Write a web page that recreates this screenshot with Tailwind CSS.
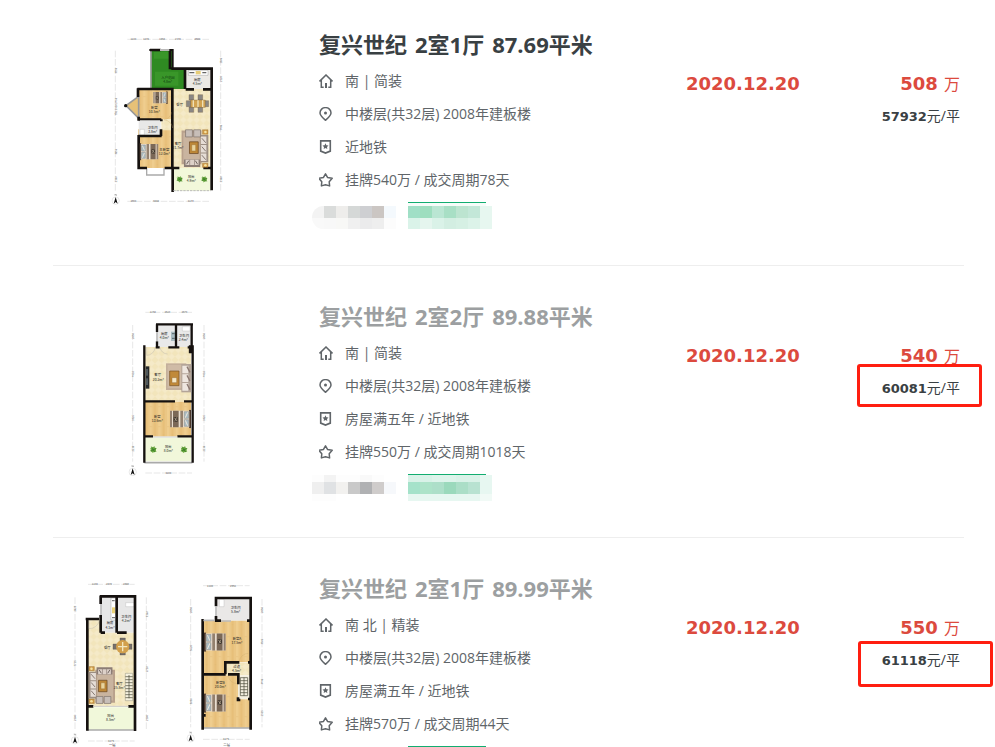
<!DOCTYPE html>
<html lang="zh-CN">
<head>
    <meta charset="UTF-8">
    <meta name="viewport" content="width=device-width, initial-scale=1.0">
    <title>复兴世纪 成交记录</title>
    <script src="https://cdn.jsdelivr.net/npm/@tailwindcss/browser@4"></script>
</head>
<body class="bg-white font-['Open_Sans','Noto_Sans_CJK_SC',sans-serif] text-[#606569]">

    <!-- Shared icons and floor plan parts -->
    <svg class="absolute w-0 h-0" aria-hidden="true">
        <defs>
            <symbol id="i-house" viewBox="0 0 14 14">
                <path d="M.5 7.400L7 1l6.500 6.400M2.300 6v7.300h2.400M11.700 6v7.300H9.300" fill="none" stroke="#606569" stroke-width="1.500"/>
                <path d="M6 9h2v5H6z" fill="#606569"/>
            </symbol>
            <symbol id="i-pin" viewBox="0 0 14 14">
                <path d="M6.500 13.300C3.500 10.600 1 8.400 1 5.900a5.500 5.300 0 0 1 11 0c0 2.500-2.500 4.700-5.500 7.400z" fill="none" stroke="#606569" stroke-width="1.500"/>
                <circle cx="6.500" cy="6" r="1.500" fill="#606569"/>
            </symbol>
            <symbol id="i-badge" viewBox="0 0 14 14">
                <path d="M1.700.9h9.600v10.200L6.500 13.100l-4.800-2z" fill="none" stroke="#606569" stroke-width="1.600"/>
                <path d="M6.500 3.300l.9 1.900 2.100.3-1.500 1.400.3 2.100-1.800-1-1.800 1 .3-2.100-1.500-1.400 2.100-.3z" fill="#606569"/>
            </symbol>
            <symbol id="i-star" viewBox="0 0 14 14">
                <path d="M6.500.9l2 3.500 4.700.9-3 3.500.4 4.100-4.100-1.100-4.100 1.100.4-4.100-3-3.500 4.700-.9z" fill="none" stroke="#606569" stroke-width="1.500" stroke-linejoin="round"/>
            </symbol>

            <pattern id="wood" width="26" height="60" patternUnits="userSpaceOnUse">
                <path d="M0 0h26v60H0z" fill="#ebc684"/>
                <path d="M0 0h7v60H0z" fill="#efcd8e"/>
                <path d="M13 0h6v60h-6z" fill="#e7be78"/>
                <path d="M0 20h7M13 44h6" stroke="#dfb36d" stroke-width="1"/>
            </pattern>
            <pattern id="tile" width="20" height="20" patternUnits="userSpaceOnUse">
                <path d="M0 0h20v20H0z" fill="#f2e5bb"/>
                <path d="M10 0l10 10-10 10L0 10z" fill="#f5eac8"/>
            </pattern>
            <symbol id="bed" viewBox="0 0 64 56">
                <path d="M0 0h6v56H0z" fill="#4a372c"/>
                <path d="M5 3h58v50H5z" fill="#e8ddd0"/>
                <path d="M24 3h8v50h-8zM57 3h6v50h-6z" fill="#94816f"/>
                <path d="M37 3h17v50H37z" fill="#7b6857"/>
                <path d="M7 6h13v20H7zM7 30h13v20H7z" fill="#a9bbc3" stroke="#6d6a60"/>
                <path d="M10 8l7 16M17 32l-7 16" stroke="#efe8db" stroke-width="3"/>
                <path d="M40 20h12v14H40z" fill="#3b332c"/>
                <path d="M42 22l8 10M49 21l-6 12" stroke="#c7b79f" stroke-width="2"/>
            </symbol>
            <symbol id="plant" viewBox="0 0 24 24">
                <path d="M12 12L4 2l7 3 5-4-1 6 8 1-6 4 5 7-8-2-4 6-1-7-8 1 5-5-4-6 8 3z" fill="#65a43a"/>
                <circle cx="12" cy="12" r="8" fill="#6aa83f"/>
                <path d="M12 12L6 5m6 7l8-3m-8 3l5 7m-5-7l-7 4" stroke="#2f7225" stroke-width="2"/>
                <circle cx="12" cy="12" r="3" fill="#3c8128"/>
            </symbol>
            <symbol id="compass" viewBox="0 0 26 34">
                <circle cx="13" cy="21" r="11" fill="none" stroke="#bbb"/>
                <path d="M13 10l6 20-6-5-6 5z" fill="#111"/>
                <path d="M11 6V1l4 5V1" fill="none" stroke="#555"/>
            </symbol>
            <!-- Sofas on the left and at the top of a rug -->
            <symbol id="lounge" viewBox="0 0 86 120">
                <path d="M24 10h62v104H24z" fill="#b9a18c"/>
                <path d="M30 17h50v90H30z" fill="#c9b49f"/>
                <path d="M3 16h24v84H3z" fill="#9c8e83"/>
                <path d="M9 20h17v23H9zM9 46h17v23H9zM9 72h17v23H9z" fill="#e6ddd6"/>
                <path d="M11 24l12 14M11 50l12 14M11 76l12 14" stroke="#83766f" stroke-width="3"/>
                <path d="M28 2h50v23H28z" fill="#8c7d76"/>
                <path d="M33 8h12v16H33zM47 8h12v16H47zM61 8h12v16H61z" fill="#ddd1c9"/>
                <path d="M36 10l7 11M70 10l-7 11" stroke="#6d625d" stroke-width="3"/>
                <path d="M34 43h27v36H34z" fill="#bd8737" stroke="#5e3d1c" stroke-width="2"/>
                <path d="M42 51h12v19H42z" fill="#e9d49c" stroke="#8a5e28"/>
                <path d="M4 0h17v13H4zM4 102h17v14H4z" fill="#cf9b48" stroke="#855b24"/>
                <circle cx="12" cy="7" r="4" fill="#f5e2a2"/>
                <circle cx="12" cy="109" r="4" fill="#f5e2a2"/>
                <path d="M27 94h21v22H27zM52 94h21v22H52z" fill="#c7beb8" stroke="#786d68" stroke-width="2"/>
            </symbol>
        </defs>
    </svg>

    <main class="h-screen overflow-hidden">
        <ul class="-mt-1.5 ml-[53px] mr-[31px]">

            <li class="flex h-[272px] border-b border-[#eeeeee]">
                <a href="#" class="flex w-[234px] shrink-0 justify-center pt-8" aria-label="户型图">
                    <svg class="w-[140px] h-[190px]" viewBox="0 -12 420 570" font-family="Noto Sans CJK SC, sans-serif" font-size="10" text-anchor="middle">
                        <g stroke="#b5b5b5" fill="none" stroke-dasharray="20 5">
                            <path d="M82 28h248M82 514h248M46 62v420M362 62v420"/>
                        </g>
                        <g fill="#555" font-size="8">
                            <text x="100" y="31">1140</text><text x="138" y="31">1270</text><text x="186" y="31">1850</text><text x="233" y="31">1370</text><text x="292" y="31">2600</text>
                            <text x="100" y="517">1650</text><text x="168" y="517">3040</text><text x="272" y="517">4170</text>
                            <text transform="translate(50 122) rotate(-90)">3750</text><text transform="translate(50 230) rotate(-90)">The 2920 2450</text><text transform="translate(50 365) rotate(-90)">3050</text><text transform="translate(50 448) rotate(-90)">2100</text>
                            <text transform="translate(366 92) rotate(-90)">1300</text><text transform="translate(366 147) rotate(-90)">2120</text><text transform="translate(366 293) rotate(-90)">7480</text><text transform="translate(366 448) rotate(-90)">2100</text>
                        </g>
                        <path d="M153 60h64v60h40v57H153z" fill="#2f8a22"/>
                        <path d="M162 66h45v20h-45zM165 125h70v42h-70z" fill="#399629"/>
                        <path d="M153 60v117" stroke="#999" stroke-width="5"/>
                        <path d="M257 119h76v58h-76z" fill="#ebe9e5"/>
                        <path d="M265 121h59v15h-59z" fill="#fff" stroke="#777"/>
                        <path d="M268 128h15M307 128h12" stroke="#666" stroke-width="4"/>
                        <path d="M287 123h15v10h-15z" fill="#e7cd77"/>
                        <path d="M112 180h103v90h-103zM114 298h103v116H114z" fill="url(#wood)"/>
                        <path d="M116 199l-38 28 38 38z" fill="#e7c177" stroke="#999" stroke-width="5"/>
                        <circle cx="77" cy="227" r="5" fill="#111"/>
                        <path d="M217 177h115v237H217zM184 267h34v34h-34z" fill="url(#tile)"/>
                        <path d="M116 270h66v48h-66z" fill="#e8e8e8"/>
                        <path d="M120 298h13v17h-13z" fill="#fff" stroke="#aaa"/>
                        <path d="M220 414h112v69H220z" fill="#f2f8da"/>
                        <path d="M140 415v20h52v-20" fill="#fff" stroke="#aaa" stroke-width="4"/>
                        <path d="M150 60h32M210 58v60M214 116h121v365M255 116v61M112 177h105v240M114 175v26M116 260v12M116 315v99h25M194 414h44M310 414h24M115 318h70M184 268v6M183 298v20M218 410v76M257 178h25M309 178h24M114 180v20" fill="none" stroke="#15110f" stroke-width="8"/>
                        <path d="M148 60h70v56M116 268h32M148 268h36" fill="none" stroke="#15110f" stroke-width="6"/>
                        <path d="M180 60h28" stroke="#ddd" stroke-width="5"/>
                        <path d="M220 482h112" stroke="#bbb" stroke-width="3" stroke-dasharray="7 3"/>
                        <path d="M191 269a24 24 0 0 0 23-22M218 294a26 26 0 0 0-26-24" fill="none" stroke="#c9a969"/>
                        <use href="#bed" x="118" y="338" width="58" height="54"/>
                        <g transform="rotate(180 181 203)"><use href="#bed" x="152" y="184" width="58" height="38"/></g>
                        <!-- Dining table -->
                        <g stroke="#6c5436" stroke-width="1">
                            <path d="M267 194h14v16h-14zM294 194h14v16h-14zM267 231h14v16h-14zM294 231h14v16h-14zM259 212h14v18h-14zM312 212h14v18h-14z" fill="#8a8784"/>
                            <path d="M272 210h44v22h-44z" fill="#d2a352"/>
                            <path d="M280 211v20M294 211v20M308 211v20" stroke="#efe1b8" stroke-width="4"/>
                        </g>
                        <g transform="rotate(180 288 353)"><use href="#lounge" x="248" y="293" width="84" height="118"/></g>
                        <use href="#plant" x="228" y="436" width="22" height="24"/><use href="#plant" x="302" y="436" width="22" height="24"/>
                        <g fill="#222">
                            <text x="204" y="146" fill="#0f3d10">入户花园</text><text x="203" y="159" fill="#0f3d10">4.8m²</text>
                            <text x="292" y="153">厨房</text><text x="292" y="165">4.5m²</text>
                            <text x="239" y="227">餐厅</text><text x="163" y="238">卧室</text><text x="163" y="250">10.5m²</text>
                            <text x="158" y="296">卫生间</text><text x="158" y="308">3.8m²</text>
                            <text x="193" y="362">主卧室</text><text x="193" y="374">12.0m²</text>
                            <text x="234" y="346">客厅</text><text x="234" y="358">21.7m²</text>
                            <text x="274" y="445">阳台</text><text x="274" y="457">4.9m²</text>
                        </g>
                        <use href="#compass" x="34" y="491" width="26" height="34"/>
                    </svg>
                </a>
                <div class="ml-8 flex-1 pt-[34px]">
                    <h2><a href="#" class="flex gap-2 text-[22px] leading-8 font-bold text-[#394043]"><span>复兴世纪</span> <span>2室1厅</span> <span>87.69平米</span></a></h2>
                    <div class="mt-1 text-sm leading-[33px]">
                        <p class="flex items-center gap-3"><svg class="size-3.5"><use href="#i-house"/></svg>南 | 简装</p>
                        <p class="flex items-center gap-3"><svg class="size-3.5"><use href="#i-pin"/></svg>中楼层(共32层) 2008年建板楼</p>
                        <p class="flex items-center gap-3"><svg class="size-3.5"><use href="#i-badge"/></svg>近地铁</p>
                        <p class="flex items-center gap-3"><svg class="size-3.5"><use href="#i-star"/></svg>挂牌540万 / 成交周期78天</p>
                    </div>
                    <div class="-ml-[7px] mt-1.5 flex gap-3">
                        <div class="mt-1 grid h-[23px] grid-cols-[repeat(7,12px)] grid-rows-[12px_11px] overflow-hidden rounded-l-full">
                            <i class="bg-[#f3f3f3]"></i><i class="bg-[#dadcdb]"></i><i class="bg-[#eeedeb]"></i><i class="bg-[#d5d8d7]"></i><i class="bg-[#cecfd2]"></i><i class="bg-[#cbc6c3]"></i><i class="bg-[#f4f9fd]"></i>
                            <i class="bg-[#f9f9f9]"></i><i class="bg-[#f8f8f8]"></i><i class="bg-[#f8f8f6]"></i><i class="bg-[#f0f0f0]"></i><i class="bg-[#ebebec]"></i><i class="bg-[#eeeeee]"></i><i class="bg-[#fcfcfc]"></i>
                        </div>
                        <div>
                            <div class="h-1 w-[78px] border-t border-[#12ad70] bg-[#f6fcf9]"></div>
                            <div class="grid grid-cols-[repeat(7,12px)] grid-rows-[12px_11px]">
                                <i class="bg-[#a0dfc6]"></i><i class="bg-[#9edebf]"></i><i class="bg-[#bae6d3]"></i><i class="bg-[#a8dfc5]"></i><i class="bg-[#bce4d0]"></i><i class="bg-[#c3e7d8]"></i><i class="bg-[#e7f7f0]"></i>
                                <i class="bg-[#daf3e9]"></i><i class="bg-[#e5f5ee]"></i><i class="bg-[#daf2e8]"></i><i class="bg-[#d3eee2]"></i><i class="bg-[#d6f0e4]"></i><i class="bg-[#dcf3e9]"></i><i class="bg-[#e7f7f0]"></i>
                            </div>
                        </div>
                    </div>
                </div>
                <p class="w-[151px] pt-[74px] font-['DejaVu_Sans',sans-serif] text-lg leading-8 font-bold text-[#dc4a3e]">2020.12.20</p>
                <div class="w-[127px] pt-[74px] pr-1 text-right">
                    <p class="text-base leading-8 text-[#dc4a3e]"><b class="mr-0.5 font-['DejaVu_Sans',sans-serif] text-lg">508</b> 万</p>
                    <p class="text-sm leading-8 text-[#394043]"><b class="font-['DejaVu_Sans',sans-serif] text-[13px]">57932</b>元/平</p>
                </div>
            </li>

            <li class="flex h-[272px] border-b border-[#eeeeee]">
                <a href="#" class="flex w-[234px] shrink-0 justify-center pt-8" aria-label="户型图">
                    <svg class="w-[110px] h-[190px]" viewBox="0 -6 330 570" font-family="Noto Sans CJK SC, sans-serif" font-size="10" text-anchor="middle">
                        <path d="M91 37h140M91 519h140M53 75v410M267 75v410" stroke="#b5b5b5" stroke-dasharray="20 5"/>
                        <g fill="#555" font-size="8">
                            <text x="113" y="40">1150</text><text x="157" y="40">1510</text><text x="208" y="40">1570</text><text x="160" y="522">4100</text>
                            <text transform="translate(57 108) rotate(-90)">2050</text><text transform="translate(57 222) rotate(-90)">4910</text><text transform="translate(57 354) rotate(-90)">3320</text><text transform="translate(57 446) rotate(-90)">2110</text>
                            <text transform="translate(271 108) rotate(-90)">2050</text><text transform="translate(271 222) rotate(-90)">4910</text><text transform="translate(271 354) rotate(-90)">3320</text><text transform="translate(271 446) rotate(-90)">2110</text>
                        </g>
                        <path d="M127 74h103v68H127z" fill="#e9e9e9"/>
                        <path d="M90 141h138v164H90z" fill="url(#tile)"/>
                        <path d="M90 305h138v105H90z" fill="url(#wood)"/>
                        <path d="M90 412h138v72H90z" fill="#f1f7da"/>
                        <path d="M202 80h23v13h-23z" fill="#fff" stroke="#aaa"/>
                        <path d="M168 95h13v28h-13z" fill="#a9bbc1"/><path d="M171 101h8M171 115h8" stroke="#58656a" stroke-width="3"/>
                        <path d="M88 488h144" stroke="#aaa" stroke-width="5"/>
                        <path d="M123 73h111M126 73v23M126 124v18M183 75v67M230 72v88M88 136v352M233 136v352M122 142h12M160 142h33M218 142h13M225 136v24M90 304h90M207 304h24M90 409h24M187 409h45" fill="none" stroke="#15110f" stroke-width="7"/>
                        <path d="M126 96v28" stroke="#bbb" stroke-width="5"/>
                        <path d="M114 411h73" stroke="#ddd" stroke-width="4"/>
                        <path d="M95 166a25 25 0 0 0 25-23M135 142a23 23 0 0 0 23 20M95 142v24" fill="none" stroke="#aaa"/>
                        <path d="M92 199h11v67H92z" fill="#27292a"/><path d="M96 207v20M96 235v20" stroke="#79898e" stroke-width="3"/>
                        <path d="M153 190h61v80h-61z" fill="#c4b09c"/><path d="M158 195h49v69h-49z" fill="#cfbba6"/>
                        <path d="M164 213h28v44h-28z" fill="#c08939" stroke="#765022" stroke-width="2"/><path d="M171 233h14v15h-14z" fill="#f5e8c6" stroke="#785024"/>
                        <path d="M199 192h30v85h-30z" fill="#b3a498"/>
                        <path d="M202 197h18v23h-18zM202 223h18v23h-18zM202 249h18v23h-18z" fill="#eee6df"/>
                        <path d="M216 200l9 17M216 226l9 17M216 252l9 17" stroke="#8a7770" stroke-width="4"/>
                        <g transform="rotate(180 196 357)"><use href="#bed" x="164" y="329" width="64" height="56"/></g>
                        <use href="#plant" x="103" y="437" width="24" height="24"/><use href="#plant" x="195" y="437" width="24" height="24"/>
                        <g fill="#222">
                            <text x="148" y="104">厨房</text><text x="148" y="116">4.0m²</text>
                            <text x="207" y="110">卫生间</text><text x="205" y="123">2.4m²</text>
                            <text x="128" y="229">客厅</text><text x="130" y="242">20.2m²</text>
                            <text x="127" y="354">卧室</text><text x="127" y="367">13.6m²</text>
                            <text x="160" y="445">阳台</text><text x="160" y="457">8.0m²</text>
                        </g>
                        <use href="#compass" x="40" y="495" width="26" height="34"/>
                    </svg>
                </a>
                <div class="ml-8 flex-1 pt-[34px]">
                    <h2><a href="#" class="flex gap-2 text-[22px] leading-8 font-bold text-[#9c9fa1]"><span>复兴世纪</span> <span>2室2厅</span> <span>89.88平米</span></a></h2>
                    <div class="mt-1 text-sm leading-[33px]">
                        <p class="flex items-center gap-3"><svg class="size-3.5"><use href="#i-house"/></svg>南 | 简装</p>
                        <p class="flex items-center gap-3"><svg class="size-3.5"><use href="#i-pin"/></svg>中楼层(共32层) 2008年建板楼</p>
                        <p class="flex items-center gap-3"><svg class="size-3.5"><use href="#i-badge"/></svg>房屋满五年 / 近地铁</p>
                        <p class="flex items-center gap-3"><svg class="size-3.5"><use href="#i-star"/></svg>挂牌550万 / 成交周期1018天</p>
                    </div>
                    <div class="-ml-[7px] mt-1.5 flex gap-3">
                        <div class="mt-px grid grid-cols-[repeat(7,12px)] grid-rows-[7px_12px_7px]">
                            <i class="bg-[#fdfdfd]"></i><i class="bg-[#f3f3f3]"></i><i class="bg-[#fdfdfd]"></i><i class="bg-[#fdfdfd]"></i><i class="bg-[#f9f9f9]"></i><i class="bg-[#fdfdfd]"></i><i></i>
                            <i class="bg-[#efefef]"></i><i class="bg-[#e0e2e4]"></i><i class="bg-[#f2f1ef]"></i><i class="bg-[#c9c9c9]"></i><i class="bg-[#b0b1b3]"></i><i class="bg-[#cfcccb]"></i><i class="bg-[#f6f8fb]"></i>
                            <i class="bg-[#fdfdfd]"></i><i class="bg-[#fdfdfd]"></i><i></i><i></i><i></i><i></i><i></i>
                        </div>
                        <div>
                            <div class="h-px w-[78px] bg-[#12ad70]"></div>
                            <div class="grid grid-cols-[repeat(7,12px)] grid-rows-[7px_12px_7px]">
                                <i class="bg-[#d9f2e8]"></i><i class="bg-[#d9f2e8]"></i><i class="bg-[#def4eb]"></i><i class="bg-[#def4eb]"></i><i class="bg-[#daf2e8]"></i><i class="bg-[#daf2e8]"></i><i class="bg-[#e7f7f1]"></i>
                                <i class="bg-[#a5e2ca]"></i><i class="bg-[#ade3c9]"></i><i class="bg-[#addfc9]"></i><i class="bg-[#9bd9bc]"></i><i class="bg-[#abdec7]"></i><i class="bg-[#b8e2d1]"></i><i class="bg-[#e7f7f1]"></i>
                                <i class="bg-[#e7f7f1]"></i><i class="bg-[#e7f7f1]"></i><i class="bg-[#e7f7f1]"></i><i class="bg-[#e7f7f1]"></i><i class="bg-[#e7f7f1]"></i><i class="bg-[#e7f7f1]"></i><i class="bg-[#f1faf6]"></i>
                            </div>
                        </div>
                    </div>
                </div>
                <p class="w-[151px] pt-[74px] font-['DejaVu_Sans',sans-serif] text-lg leading-8 font-bold text-[#dc4a3e]">2020.12.20</p>
                <div class="w-[127px] pt-[74px] pr-1 text-right">
                    <p class="text-base leading-8 text-[#dc4a3e]"><b class="mr-0.5 font-['DejaVu_Sans',sans-serif] text-lg">540</b> 万</p>
                    <p class="relative text-sm leading-8 text-[#394043]"><b class="font-['DejaVu_Sans',sans-serif] text-[13px]">60081</b>元/平
                        <span class="absolute -top-2 -right-[22px] h-[43px] w-[125px] rounded-[3px] border-3 border-[#ff1e10]"></span>
                    </p>
                </div>
            </li>

            <li class="flex h-[272px] border-b border-[#eeeeee]">
                <a href="#" class="flex w-[234px] shrink-0 justify-center gap-[5px] pt-8" aria-label="户型图">
                    <svg class="w-[110px] h-[190px]" viewBox="-7 0 330 570" font-family="Noto Sans CJK SC, sans-serif" font-size="10" text-anchor="middle">
                        <path d="M83 43h140M83 513h140M44 82v400M258 82v400" stroke="#b5b5b5" stroke-dasharray="20 5"/>
                        <g fill="#555" font-size="8">
                            <text x="103" y="46">1100</text><text x="146" y="46">1570</text><text x="197" y="46">1600</text><text x="152" y="516">4175</text>
                            <text transform="translate(48 116) rotate(-90)">2025</text><text transform="translate(48 280) rotate(-90)">7715</text><text transform="translate(48 444) rotate(-90)">2100</text>
                            <text transform="translate(262 133) rotate(-90)">3100</text><text transform="translate(262 298) rotate(-90)">6720</text><text transform="translate(262 444) rotate(-90)">2100</text>
                        </g>
                        <path d="M122 80h102v108H122z" fill="#e7e7e7"/>
                        <path d="M82 148h40v40h102v222H82z" fill="url(#tile)"/>
                        <path d="M83 412h138v68H83z" fill="#f1f8da"/>
                        <path d="M152 84h15v66h-15z" fill="#fff" stroke="#777"/><path d="M155 92h8M155 143h9" stroke="#777" stroke-width="4"/><path d="M155 112h9v18h-9z" fill="#ead277"/>
                        <path d="M196 98h25v12h-25z" fill="#fff" stroke="#aaa"/>
                        <path d="M82 480h138" stroke="#aaa" stroke-width="5"/>
                        <path d="M118 79h110M121 78v24M121 135v53M169 80v108M224 76v407M81 147v335M76 147h40M121 188h13M170 188h29M81 409h18M204 409h20" fill="none" stroke="#15110f" stroke-width="8"/>
                        <path d="M122 102v33" stroke="#bbb" stroke-width="5"/><path d="M99 409h105" stroke="#ccc" stroke-width="3"/>
                        <path d="M86 176a30 30 0 0 0 31-26M86 150v26" fill="none" stroke="#aaa"/>
                        <path d="M179 204h16v13h-16zM179 242h16v13h-16zM158 222h14v16h-14zM201 222h14v16h-14z" fill="#76706b" stroke="#574f48"/>
                        <circle cx="187" cy="230" r="20" fill="#d2a04c"/><path d="M173 230h28M187 216v28" stroke="#f3e7bf" stroke-width="4"/>
                        <use href="#lounge" x="82" y="288" width="82" height="118"/>
                        <path d="M195 310h22v82h-22z" fill="#f5f1df" stroke="#665"/><path d="M195 320h22M195 329h22M195 338h22M195 347h22M195 356h22M195 365h22M195 374h22M195 383h22M206 315v70" stroke="#443" stroke-width="2"/>
                        <g fill="#222">
                            <text x="149" y="163">厨房</text><text x="149" y="176">4.1m²</text>
                            <text x="198" y="143">卫生间</text><text x="198" y="155">4.2m²</text>
                            <text x="141" y="236">餐厅</text><text x="177" y="345">客厅</text><text x="177" y="358">25.8m²</text>
                            <text x="151" y="441">阳台</text><text x="151" y="453">8.5m²</text><text x="156" y="528">一层</text>
                        </g>
                        <use href="#compass" x="31" y="490" width="26" height="34"/>
                    </svg>
                    <svg class="w-[110px] h-[190px]" viewBox="-7 0 330 570" font-family="Noto Sans CJK SC, sans-serif" font-size="10" text-anchor="middle">
                        <path d="M83 47h140M83 508h140M46 87v385M260 87v385" stroke="#b5b5b5" stroke-dasharray="20 5"/>
                        <g fill="#555" font-size="8">
                            <text x="104" y="50">1100</text><text x="173" y="50">2950</text><text x="152" y="511">4175</text>
                            <text transform="translate(50 120) rotate(-90)">2050</text><text transform="translate(50 234) rotate(-90)">5020</text><text transform="translate(50 394) rotate(-90)">5030</text>
                            <text transform="translate(264 120) rotate(-90)">2050</text><text transform="translate(264 215) rotate(-90)">3700</text><text transform="translate(264 335) rotate(-90)">3490</text><text transform="translate(264 430) rotate(-90)">2515</text>
                        </g>
                        <path d="M123 84h101v68H123z" fill="#eae8e7"/>
                        <path d="M83 152h141v125h-74v36H83zM83 316h105v72h36v85H83z" fill="url(#wood)"/>
                        <path d="M150 278h74v38h-74z" fill="url(#tile)"/>
                        <path d="M188 316h36v71h-36z" fill="#f4efe0"/>
                        <path d="M132 88h14v22h-14z" fill="#fff" stroke="#aaa"/>
                        <path d="M80 474h145" stroke="#aaa" stroke-width="5"/>
                        <path d="M118 84h112M122 82v27M122 138v16M226 82v397M82 147v332M119 152h18M215 152h13M83 313h68M150 313v-36h42M218 277h8M158 313h31v30M188 382v8h7M218 387h8M83 436h8" fill="none" stroke="#15110f" stroke-width="8"/>
                        <path d="M122 109v29M84 151h35M137 153h30" stroke="#bbb" stroke-width="5"/>
                        <path d="M195 323h22v54h-22zM195 332h22M195 341h22M195 350h22M195 359h22M195 368h22M206 323v54" fill="none" stroke="#443" stroke-width="2"/>
                        <path d="M192 273a28 28 0 0 1 27-23M159 318a27 27 0 0 0 26 23" fill="none" stroke="#c9a969"/>
                        <use href="#bed" x="86" y="187" width="66" height="58"/>
                        <use href="#bed" x="86" y="370" width="66" height="58"/>
                        <g fill="#222">
                            <text x="181" y="117">卫生间</text><text x="181" y="129">5.8m²</text>
                            <text x="185" y="211">卧室A</text><text x="185" y="223">17.5m²</text>
                            <text x="184" y="293">过道</text><text x="184" y="305">4.5m²</text>
                            <text x="135" y="341">卧室B</text><text x="135" y="353">20.0m²</text>
                            <text x="154" y="528">二层</text>
                        </g>
                        <use href="#compass" x="33" y="484" width="26" height="34"/>
                    </svg>
                </a>
                <div class="ml-8 flex-1 pt-[34px]">
                    <h2><a href="#" class="flex gap-2 text-[22px] leading-8 font-bold text-[#9c9fa1]"><span>复兴世纪</span> <span>2室1厅</span> <span>89.99平米</span></a></h2>
                    <div class="mt-1 text-sm leading-[33px]">
                        <p class="flex items-center gap-3"><svg class="size-3.5"><use href="#i-house"/></svg>南 北 | 精装</p>
                        <p class="flex items-center gap-3"><svg class="size-3.5"><use href="#i-pin"/></svg>中楼层(共32层) 2008年建板楼</p>
                        <p class="flex items-center gap-3"><svg class="size-3.5"><use href="#i-badge"/></svg>房屋满五年 / 近地铁</p>
                        <p class="flex items-center gap-3"><svg class="size-3.5"><use href="#i-star"/></svg>挂牌570万 / 成交周期44天</p>
                    </div>
                    <div class="-ml-[7px] mt-1.5 flex gap-3">
                        <div class="w-[84px]"></div>
                        <div class="h-6 w-[78px] border-t border-[#12ad70] bg-[#e7f7f1]"></div>
                    </div>
                </div>
                <p class="w-[151px] pt-[74px] font-['DejaVu_Sans',sans-serif] text-lg leading-8 font-bold text-[#dc4a3e]">2020.12.20</p>
                <div class="w-[127px] pt-[74px] pr-1 text-right">
                    <p class="text-base leading-8 text-[#dc4a3e]"><b class="mr-0.5 font-['DejaVu_Sans',sans-serif] text-lg">550</b> 万</p>
                    <p class="relative text-sm leading-8 text-[#394043]"><b class="font-['DejaVu_Sans',sans-serif] text-[13px]">61118</b>元/平
                        <span class="absolute -top-[3px] -right-[33px] h-[46px] w-[135px] rounded-[3px] border-3 border-[#ff1e10]"></span>
                    </p>
                </div>
            </li>
        </ul>
    </main>
</body>
</html>
